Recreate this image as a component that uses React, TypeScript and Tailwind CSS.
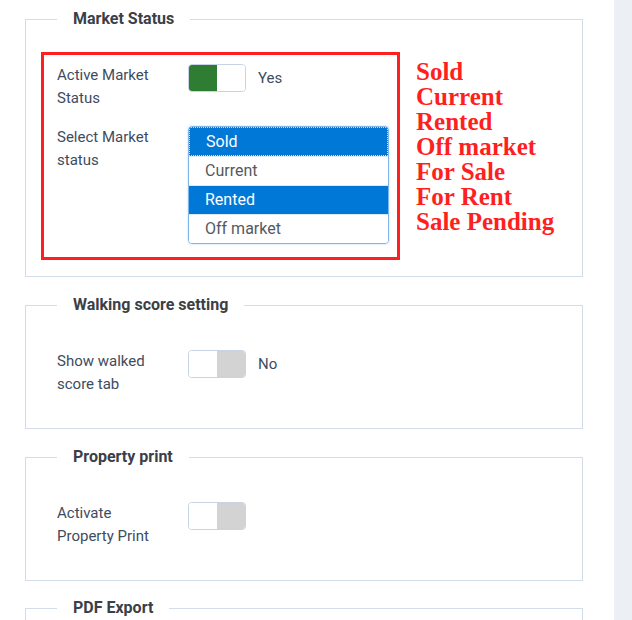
import React from 'react';

type ToggleProps = { on: boolean };

const Toggle: React.FC<ToggleProps> = ({ on }) => (
  <div className="flex h-[28px] w-[58px] shrink-0 overflow-hidden rounded-[4px] border border-[#c6d4e4]">
    <div className={on ? 'w-1/2 bg-[#2e7d32]' : 'w-1/2 bg-white'} />
    <div className={on ? 'w-1/2 bg-white' : 'w-1/2 bg-[#d3d3d3]'} />
  </div>
);

const Section: React.FC<{ title: string; children?: React.ReactNode; className?: string }> = ({
  title,
  children,
  className = '',
}) => (
  <fieldset className={`relative border border-[#d3dde9] px-[31px] pt-[34px] pb-[32px] ${className}`}>
    <legend className="px-[16px] text-[16px] leading-[22px] font-bold text-[#3b4048]">{title}</legend>
    {children}
  </fieldset>
);

const Row: React.FC<{ label: React.ReactNode; children?: React.ReactNode; className?: string }> = ({
  label,
  children,
  className = '',
}) => (
  <div className={`flex items-start ${className}`}>
    <div className="w-[131px] shrink-0 pr-[20px] text-[15px] leading-[23px] text-[#3e4c60]">{label}</div>
    {children}
  </div>
);

const options = [
  { name: 'Sold', selected: true, focus: true },
  { name: 'Current', selected: false },
  { name: 'Rented', selected: true },
  { name: 'Off market', selected: false },
];

const notes = ['Sold', 'Current', 'Rented', 'Off market', 'For Sale', 'For Rent', 'Sale Pending'];

export default function App() {
  return (
    <div className="flex h-[620px] w-[632px] overflow-hidden bg-white font-['Roboto',sans-serif]">
      <div className="w-[614px] shrink-0 bg-white pt-[8px] pl-[25px] pr-[31px]">
        {/* Market status */}
        <Section title="Market Status">
          <Row label={<>Active Market<br />Status</>}>
            <div className="flex items-center">
              <Toggle on />
              <span className="ml-[12px] text-[15px] text-[#3e4c60]">Yes</span>
            </div>
          </Row>
          <Row label={<>Select Market<br />status</>} className="mt-[16px]">
            <div className="w-[201px] overflow-hidden rounded-[4px] border border-[#7fb6ec] shadow-[0_0_2px_rgba(0,120,215,0.35)]">
              {options.map((o) => (
                <div
                  key={o.name}
                  className={
                    'h-[29px] pl-[16px] text-[16px] leading-[28px] ' +
                    (o.selected ? 'bg-[#0078d7] text-white' : 'bg-white text-[#555a60]') +
                    (o.focus ? ' border border-dotted border-[#cfe4fa]' : ' border-t border-[#dde9f5]')
                  }
                >
                  {o.name}
                </div>
              ))}
            </div>
          </Row>

          {/* annotation overlay */}
          <div className="pointer-events-none absolute top-[22px] left-[15px] h-[208px] w-[359px] border-[3px] border-[#ff1f1f]" />
          <div className="absolute top-[29px] left-[390px] font-['Liberation_Serif',serif] text-[25px] leading-[25px] font-bold text-[#ff1f1f]">
            {notes.map((n) => (
              <div key={n}>{n}</div>
            ))}
          </div>
        </Section>

        <Section title="Walking score setting" className="mt-[17px]">
          <Row label={<>Show walked<br />score tab</>}>
            <div className="flex items-center">
              <Toggle on={false} />
              <span className="ml-[12px] text-[15px] text-[#3e4c60]">No</span>
            </div>
          </Row>
        </Section>

        <Section title="Property print" className="mt-[17px]">
          <Row label={<>Activate<br />Property Print</>}>
            <Toggle on={false} />
          </Row>
        </Section>

        <Section title="PDF Export" className="mt-[16px]">
          <div className="h-[60px]" />
        </Section>
      </div>
      <div className="flex-1 bg-[#ecf0f5]" />
    </div>
  );
}
